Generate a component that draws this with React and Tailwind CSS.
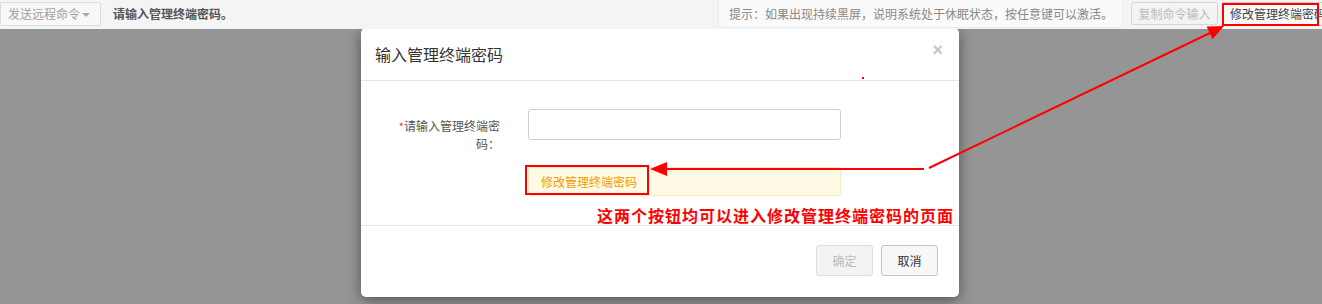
import React from 'react';

const font = { fontFamily: '"Noto Sans CJK SC", "Liberation Sans", sans-serif' };

const TopBar = () => (
  <div className="h-[29px] bg-[#f4f4f4] flex items-start relative z-10 text-[12px]">
    {/* remote command dropdown */}
    <button className="mt-[2px] h-[24px] w-[101px] border border-[#dcdcdc] bg-[#f8f8f8] text-[#a0a0a0] flex items-center pl-[7px] rounded-[2px]">
      发送远程命令
      <span className="ml-[2px] mt-[1px] w-0 h-0 border-l-[4px] border-r-[4px] border-t-[4px] border-l-transparent border-r-transparent border-t-[#aaa]" />
    </button>
    <div className="ml-[12px] mt-[5px] font-bold text-[#555]">请输入管理终端密码。</div>

    <div className="ml-auto flex items-start">
      <div className="h-[28px] w-[405px] bg-[#fafafa] border border-t-0 border-[#ececec] rounded-b-[4px] text-[#888] pl-[10px] flex items-center">
        提示：如果出现持续黑屏，说明系统处于休眠状态，按任意键可以激活。
      </div>
      <button className="ml-[8px] mt-[2px] h-[23px] w-[87px] border border-[#d6d6d6] bg-[#f3f3f3] text-[#bbb] rounded-[2px]">
        复制命令输入
      </button>
      <button className="ml-[4px] mt-[2px] h-[24px] w-[104px] border border-[#ccc] bg-[#f9f9f9] text-[#444] text-left pl-[7px] whitespace-nowrap overflow-hidden rounded-[2px] -mr-[4px]">
        修改管理终端密码
      </button>
    </div>
  </div>
);

const Modal = () => (
  <div className="relative -mt-px ml-[361px] w-[598px] h-[269px] bg-white rounded-[5px] shadow-[0_3px_14px_rgba(0,0,0,0.45)] flex flex-col text-[12px]">
    {/* header */}
    <div className="h-[53px] shrink-0 border-b border-[#e5e5e5] flex items-center justify-between pl-[14px] pr-[16px]">
      <h4 className="text-[16px] text-[#333]">输入管理终端密码</h4>
      <span className="text-[18px] font-bold text-[#c4c4c4] leading-none -mt-[8px]" style={{ fontFamily: '"Liberation Sans", sans-serif' }}>×</span>
    </div>
    <span className="absolute left-[501px] top-[49px] w-[2px] h-[2px] bg-[#f00]" />

    {/* body */}
    <div className="flex-1 pt-[28px]">
      <div className="flex items-start h-[31px]">
        <label className="ml-[32px] w-[107px] mt-[8px] text-right text-[#555] leading-[17px]">
          <span className="text-[#e33] text-[11px]">*</span>请输入管理终端密码：
        </label>
        <input
          type="password"
          className="ml-[28px] w-[313px] h-[31px] border border-[#cfcfcf] rounded-[3px] outline-none"
        />
      </div>
      <div className="ml-[167px] mt-[27px] w-[313px] h-[29px] bg-[#fffae6] border border-[#fbe8c4] rounded-[3px] flex items-center pl-[12px]">
        <a className="text-[#f29a00]">修改管理终端密码</a>
      </div>
    </div>

    {/* footer */}
    <div className="h-[72px] shrink-0 border-t border-[#e5e5e5] flex items-start justify-end pt-[19px] pr-[21px] gap-[8px]">
      <button className="w-[57px] h-[31px] border border-[#ddd] bg-[#f3f3f3] text-[#bbb] rounded-[3px]">确定</button>
      <button className="w-[57px] h-[31px] border border-[#c4c4c4] bg-[#f7f7f7] text-[#333] rounded-[3px]">取消</button>
    </div>

    {/* annotation text */}
    <div className="absolute left-[236px] top-[178px] text-[16px] font-bold text-[#f00] whitespace-nowrap leading-[18px] tracking-[1px]">
      这两个按钮均可以进入修改管理终端密码的页面
    </div>
  </div>
);

const Annotations = () => (
  <>
    <div className="absolute left-[525px] top-[165px] w-[124px] h-[30px] border-2 border-[#f00] pointer-events-none" />
    <div className="absolute left-[1222px] top-[3px] w-[97px] h-[23px] border-2 border-[#f00] pointer-events-none z-20" />
    <svg className="absolute inset-0 pointer-events-none z-20" width="1322" height="304">
      <line x1="924" y1="169" x2="664" y2="169" stroke="#f00" strokeWidth="2" />
      <polygon points="650,169 667,162 667,176" fill="#f00" />
      <line x1="929" y1="168" x2="1210" y2="33" stroke="#f00" strokeWidth="2" />
      <polygon points="1224,26 1212.6,39.2 1206.6,26.6" fill="#f00" />
    </svg>
  </>
);

export default function App() {
  return (
    <div className="relative w-[1322px] h-[304px] overflow-hidden flex flex-col" style={font}>
      <TopBar />
      <div className="flex-1 bg-[#959595]">
        <Modal />
      </div>
      <Annotations />
    </div>
  );
}
